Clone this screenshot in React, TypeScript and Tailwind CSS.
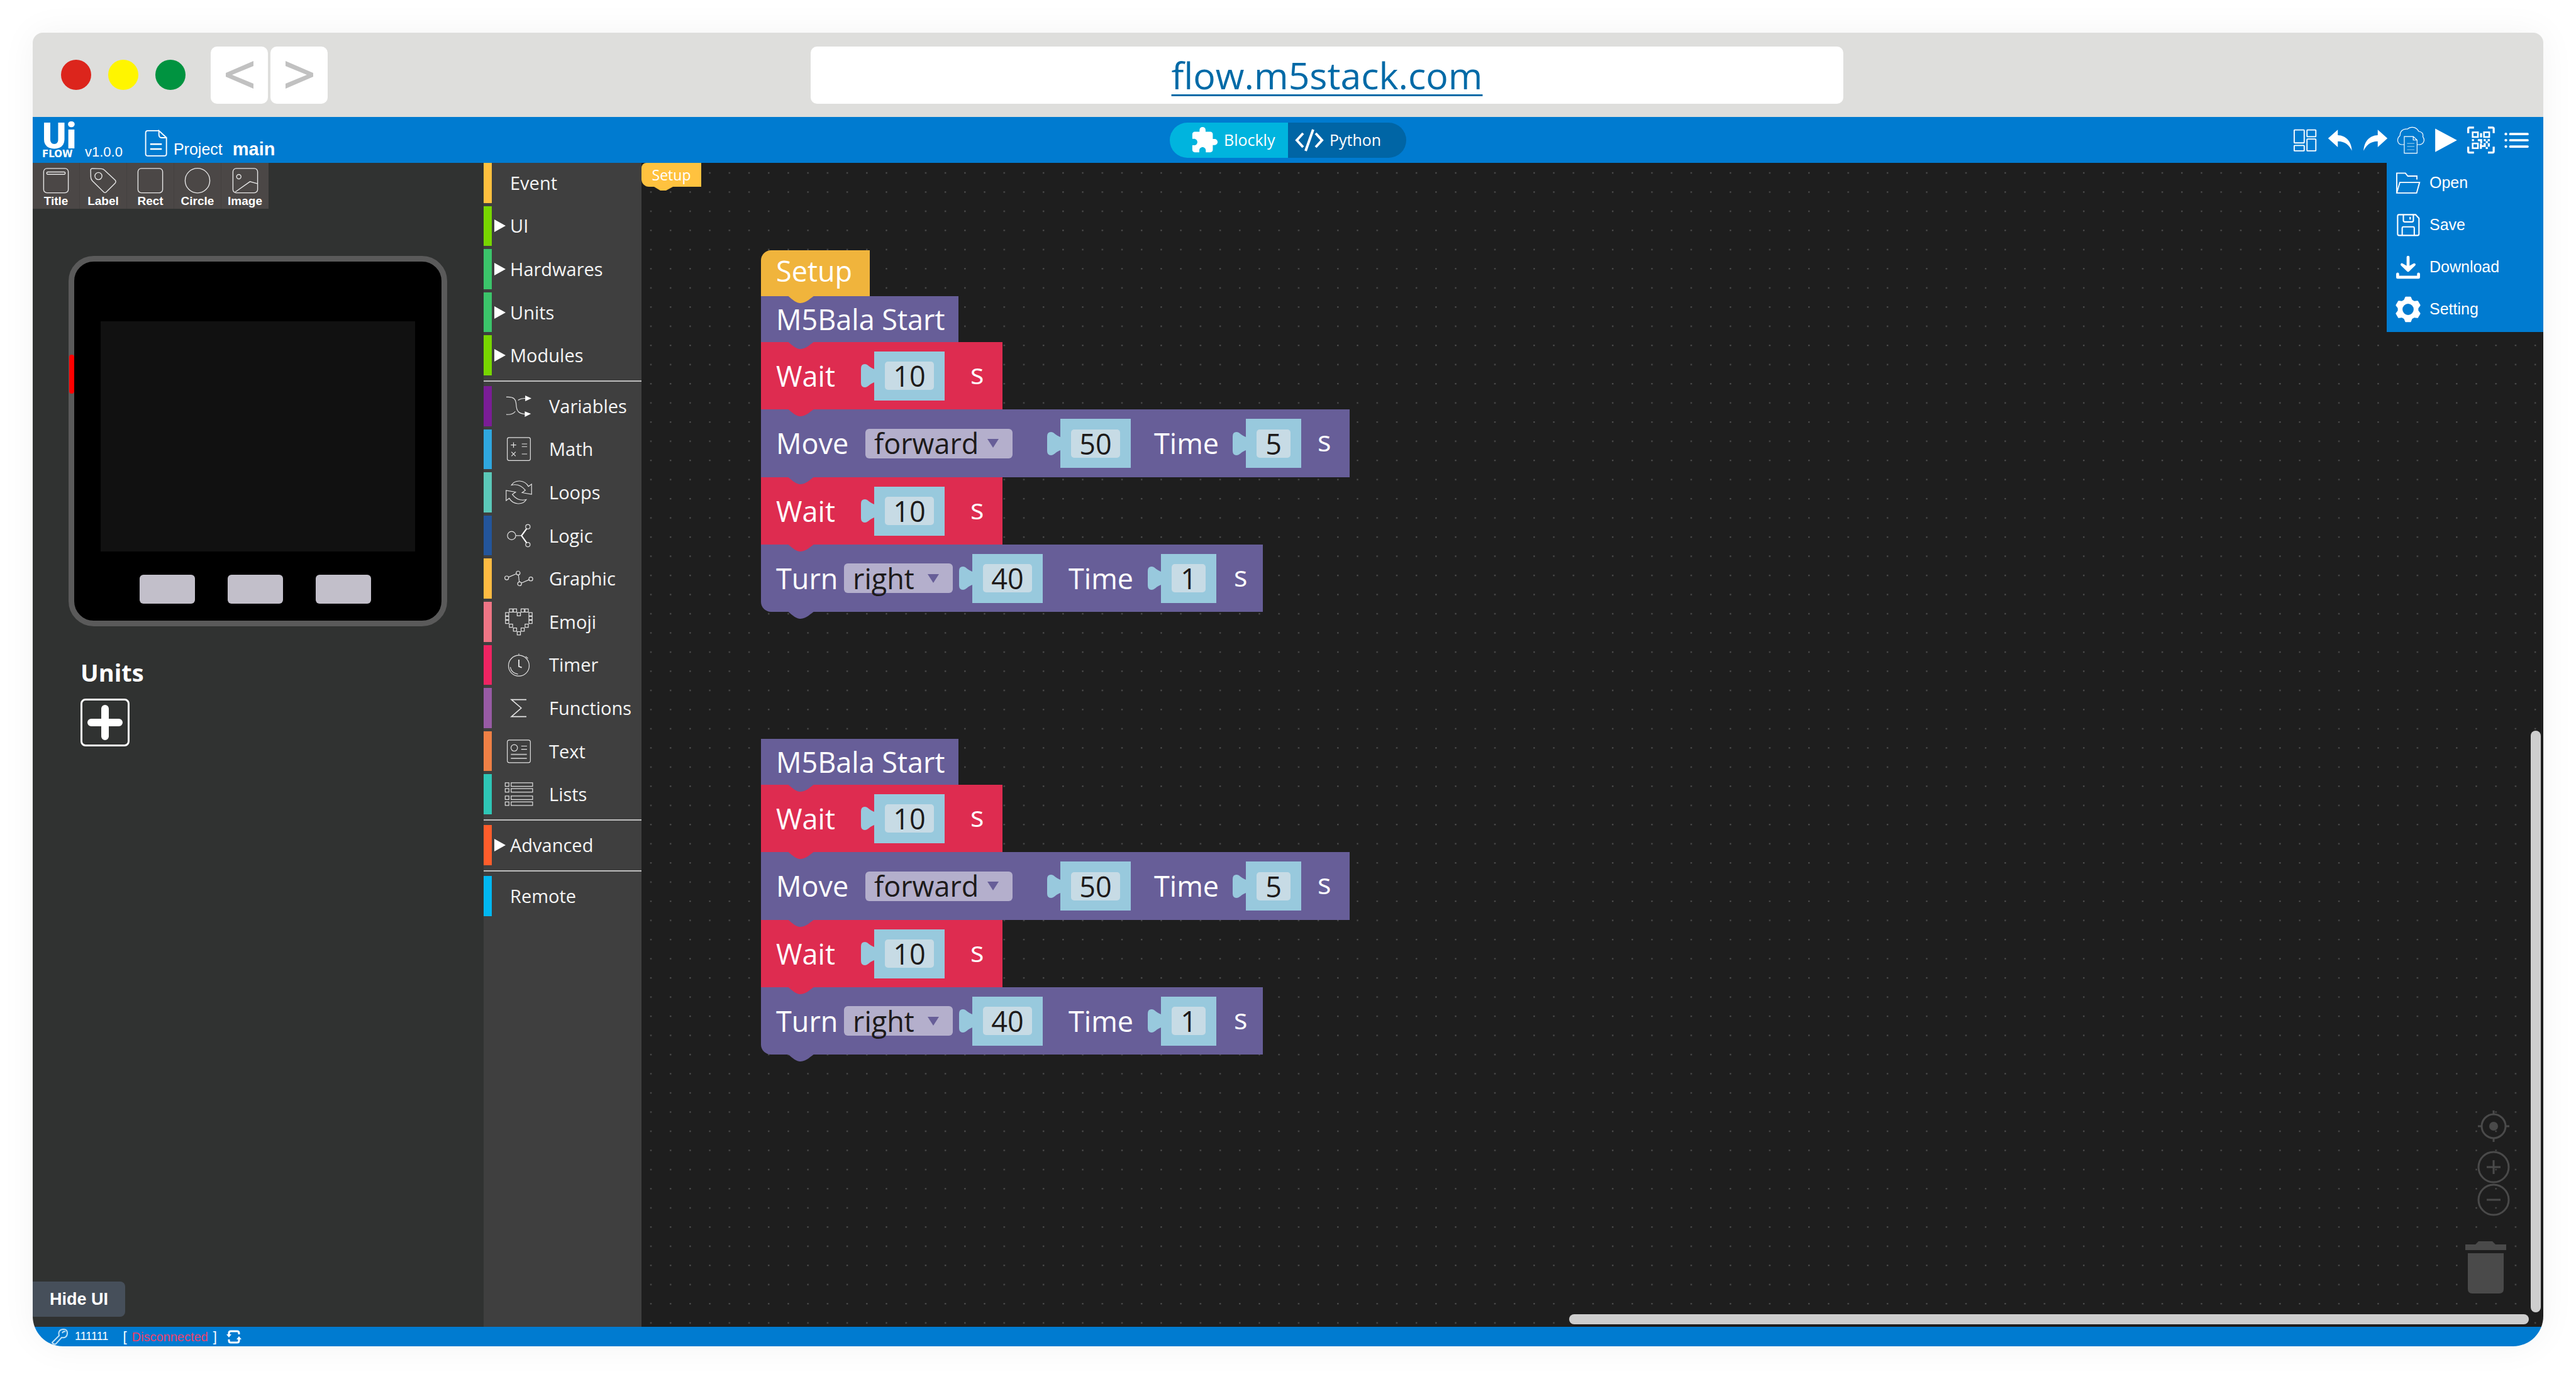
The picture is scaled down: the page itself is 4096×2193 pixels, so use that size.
import React from 'react';
import { MdExtension } from 'react-icons/md';

const SEGOE = "font-['Open_Sans','Noto_Sans',sans-serif]";

/* ---------- toolbar icons ---------- */

function ToolbarIcon({ children }: { children: React.ReactNode }) {
  return (
    <svg viewBox="0 0 188 188" className="size-11" fill="none" stroke="none" aria-hidden="true">
      {children}
    </svg>
  );
}

const undoPath = 'M12 81 L78 22 V60 C135 62 170 103 174 166 C155 128 130 103 78 102 V141Z';

const actions = [
  {
    name: 'Layout',
    icon: (
      <g stroke="#fff" strokeWidth="8">
        <rect x="21" y="24" width="68" height="88" rx="3" />
        <rect x="108" y="24" width="60" height="46" rx="3" />
        <rect x="108" y="86" width="60" height="80" rx="3" />
        <rect x="21" y="130" width="68" height="36" rx="3" />
      </g>
    ),
  },
  { name: 'Undo', icon: <path d={undoPath} fill="#fff" /> },
  { name: 'Redo', icon: <path d={undoPath} fill="#fff" transform="translate(188 0) scale(-1 1)" /> },
  {
    name: 'Cloud files',
    icon: (
      <g stroke="#fff" strokeWidth="5">
        <path d="M51 124 H37 C4 124 -4 85 22 63 C22 33 42 14 72 18 C97 -3 135 5 148 33 C172 38 182 50 177 70 C196 95 180 124 150 124 H138" />
        <path d="M51 69 H112 L138 93 V182 H51Z M112 69 V93 H138" />
        <path d="M70 116 H120 M70 136 H120 M70 158 H120" strokeOpacity="0.55" />
      </g>
    ),
  },
  { name: 'Run', icon: <path d="M22 15 L170 94 L22 174Z" fill="#fff" /> },
  {
    name: 'QR code',
    icon: (
      <g>
        <path
          d="M7 46 V16 Q7 8 15 8 H46 M141 8 H172 Q180 8 180 16 V46 M180 138 V170 Q180 178 172 178 H141 M46 178 H15 Q7 178 7 170 V138"
          stroke="#fff"
          strokeWidth="14"
        />
        <g stroke="#fff" strokeWidth="11">
          <rect x="37" y="40" width="36" height="32" />
          <rect x="114" y="40" width="36" height="32" />
          <rect x="37" y="116" width="36" height="32" />
        </g>
        <path
          fill="#fff"
          d="M87 46h14v29H87z M32 86h14v14H32z M72 86h30v14H72z M88 100h14v14H88z M112 86h14v14h-14z M139 86h15v14h-15z M126 100h14v14h-14z M140 114h14v24h-14z M86 116h14v37H86z M100 128h26v12h-26z M112 114h14v14h-14z M126 140h14v14h-14z"
        />
      </g>
    ),
  },
  {
    name: 'Menu',
    icon: (
      <g stroke="#fff" strokeWidth="16" strokeLinecap="round">
        <path d="M23 52h1 M23 94h1 M23 137h1" strokeWidth="18" />
        <path d="M53 52H171 M53 94H171 M53 137H171" />
      </g>
    ),
  },
];

const menuItems = [
  {
    name: 'Open',
    icon: (
      <g stroke="#fff" strokeWidth="8">
        <path d="M17 160 V27 H76 L92 47 H154 V70" />
        <path d="M17 162 L38 90 H172 L152 162Z" />
      </g>
    ),
  },
  {
    name: 'Save',
    icon: (
      <g stroke="#fff" strokeWidth="9">
        <path d="M33 23 H145 L168 48 V154 Q168 164 158 164 H33 Q23 164 23 154 V33 Q23 23 33 23Z" />
        <path d="M62 23 V62 Q62 72 72 72 H120 Q130 72 130 62 V23" />
        <path d="M54 164 V114 Q54 106 62 106 H128 Q136 106 136 114 V164" />
        <rect x="103" y="38" width="10" height="18" fill="#fff" stroke="none" />
      </g>
    ),
  },
  {
    name: 'Download',
    icon: (
      <g stroke="#fff" strokeWidth="20" strokeLinecap="round" strokeLinejoin="round">
        <path d="M94 26 V104" />
        <path d="M52 76 L94 116 L136 76 L94 100Z" fill="#fff" strokeWidth="18" />
        <path d="M23 140 V162 H165 V140" />
      </g>
    ),
  },
  {
    name: 'Setting',
    icon: (
      <g transform="translate(94 94)">
        <circle r="54" stroke="#fff" strokeWidth="32" />
        {[0, 60, 120, 180, 240, 300].map((a) => (
          <path
            key={a}
            d="M-15 -82 H15 L26 -56 H-26Z"
            fill="#fff"
            stroke="#fff"
            strokeWidth="10"
            strokeLinejoin="round"
            transform={`rotate(${a})`}
          />
        ))}
      </g>
    ),
  },
];

/* ---------- design tools ---------- */

const tools = [
  {
    name: 'Title',
    icon: (
      <>
        <rect x="6" y="8" width="168" height="166" rx="22" />
        <rect x="27" y="32" width="126" height="16" rx="8" />
      </>
    ),
  },
  {
    name: 'Label',
    icon: (
      <>
        <path d="M5 20 Q5 8 17 8 L78 10 Q92 11 100 20 L172 88 Q180 97 172 108 L112 168 Q103 178 93 168 L16 92 Q6 80 6 66Z" />
        <circle cx="58" cy="60" r="24" />
      </>
    ),
  },
  { name: 'Rect', icon: <rect x="6" y="8" width="168" height="166" rx="22" /> },
  { name: 'Circle', icon: <circle cx="90" cy="91" r="84" /> },
  {
    name: 'Image',
    icon: (
      <>
        <rect x="6" y="8" width="168" height="166" rx="22" />
        <circle cx="46" cy="64" r="15" />
        <path d="M22 168 L122 98 L174 112" />
      </>
    ),
  },
];

/* ---------- block categories ---------- */

const heartCells: [number, number][] = [
  [-53, -77], [-26, -77], [26, -77], [53, -77],
  [-79, -52], [0, -52], [79, -52],
  [-79, -26], [79, -26],
  [-79, 0], [79, 0],
  [-53, 26], [53, 26],
  [-26, 52], [26, 52],
  [0, 77],
];

const loopArrow = 'M-50 -49 C-27 -87 38 -87 65 -40 L86 -56 V13 L22 2 L44 -14 C18 -47 -17 -57 -50 -49Z';

type Category = { name: string; color: string; expandable?: boolean; icon?: React.ReactNode };

const groups: Category[][] = [
  [
    { name: 'Event', color: 'bg-[#ffc03e]' },
    { name: 'UI', color: 'bg-[#77d600]', expandable: true },
    { name: 'Hardwares', color: 'bg-[#3bc46a]', expandable: true },
    { name: 'Units', color: 'bg-[#3bc46a]', expandable: true },
    { name: 'Modules', color: 'bg-[#77d600]', expandable: true },
  ],
  [
    {
      name: 'Variables',
      color: 'bg-[#7a1d96]',
      icon: (
        <>
          <path d="M-85 -62 C-32 -66 -20 -46 -18 -12 C-16 38 3 50 43 53 M-85 56 C-57 58 -37 53 -24 35 M-5 -40 C8 -50 23 -53 43 -53" />
          <path d="M43 -72 L85 -53 L43 -34Z M40 35 L82 51 L40 72Z" fill="#fff" stroke="none" />
        </>
      ),
    },
    {
      name: 'Math',
      color: 'bg-[#2fa7df]',
      icon: (
        <>
          <rect x="-78" y="-77" width="156" height="155" rx="12" />
          <path d="M-54 -27H-18 M-36 -45V-9 M20 -34H56 M20 -16H56 M-50 20L-22 48 M-22 20L-50 48 M20 34H56" />
        </>
      ),
    },
    {
      name: 'Loops',
      color: 'bg-[#5bc8b8]',
      icon: (
        <>
          <path d={loopArrow} />
          <path d={loopArrow} transform="rotate(180)" />
        </>
      ),
    },
    {
      name: 'Logic',
      color: 'bg-[#23559b]',
      icon: (
        <>
          <circle cx="-49" cy="-1" r="28" />
          <path d="M-21 -1H18" />
          <path d="M53 -48L18 -1L53 48" strokeWidth="9" stroke="#fff" />
          <circle cx="61" cy="-61" r="15" />
          <circle cx="61" cy="60" r="15" />
        </>
      ),
    },
    {
      name: 'Graphic',
      color: 'bg-[#ffbb42]',
      icon: (
        <>
          <circle cx="-82" cy="-4" r="13" />
          <circle cx="-5" cy="-37" r="13" />
          <circle cx="5" cy="36" r="13" />
          <circle cx="81" cy="3" r="13" />
          <path d="M-70 -9L-17 -32 M-3 -24L3 23 M17 31L69 8" />
        </>
      ),
    },
    {
      name: 'Emoji',
      color: 'bg-[#ee7585]',
      icon: (
        <>
          {heartCells.map(([x, y]) => (
            <rect key={`${x},${y}`} x={x - 11} y={y - 11} width="22" height="22" />
          ))}
        </>
      ),
    },
    {
      name: 'Timer',
      color: 'bg-[#ee2462]',
      icon: (
        <>
          <circle cx="0" cy="7" r="70" />
          <path d="M0 -66V-74 M46 -56L62 -42 M-58 16C-52 44 -32 60 -6 64" />
          <path d="M0 -34V12L20 20" strokeWidth="8" />
        </>
      ),
    },
    { name: 'Functions', color: 'bg-[#985ba5]', icon: <path d="M51 -57H-50L16 0L-50 58H51" strokeWidth="7" /> },
    {
      name: 'Text',
      color: 'bg-[#ef8045]',
      icon: (
        <>
          <rect x="-78" y="-77" width="156" height="153" rx="14" />
          <circle cx="-31" cy="-24" r="22" />
          <path d="M16 -36H55 M16 -14H55" />
          <path d="M-54 20H54 M-54 47H54" strokeWidth="9" strokeOpacity="0.7" />
        </>
      ),
    },
    {
      name: 'Lists',
      color: 'bg-[#2ec6b6]',
      icon: (
        <>
          {[-65, -26, 24, 64].map((y) => (
            <g key={y}>
              <rect x="-92" y={y - 12} width="25" height="24" />
              <rect x="-52" y={y - 12} width="145" height="24" />
            </g>
          ))}
        </>
      ),
    },
  ],
  [{ name: 'Advanced', color: 'bg-[#ff5d2b]', expandable: true }],
  [{ name: 'Remote', color: 'bg-[#00b7f1]' }],
];

function CategoryRow({ name, color, expandable, icon }: Category) {
  return (
    <button type="button" className="flex min-h-0 flex-1 items-center text-left">
      <span className={`${color} w-[13px] self-stretch`} />
      {icon ? (
        <span className="flex w-[91px] items-center pl-[19px]">
          <svg viewBox="-102 -102 204 204" className="size-12" fill="none" stroke="#e4e4e4" strokeWidth="5" aria-hidden="true">
            {icon}
          </svg>
        </span>
      ) : (
        <span className="w-[29px] pl-1">
          {expandable && (
            <svg viewBox="0 0 18 20" className="h-5 w-[18px]" aria-hidden="true">
              <path d="M0 0L18 10L0 20Z" fill="#fff" />
            </svg>
          )}
        </span>
      )}
      <span className="leading-10">{name}</span>
    </button>
  );
}

/* ---------- blocks ---------- */

const fills = {
  amber: { bg: 'bg-[#f0b43c]', fill: 'fill-[#f0b43c]' },
  violet: { bg: 'bg-[#675e98]', fill: 'fill-[#675e98]' },
  red: { bg: 'bg-[#de2c50]', fill: 'fill-[#de2c50]' },
};

function Block({ tone, className, children }: { tone: keyof typeof fills; className: string; children: React.ReactNode }) {
  return (
    <div className={`relative flex items-center pl-[24px] ${fills[tone].bg} ${className}`}>
      {children}
      <svg viewBox="0 0 43 12" className={`absolute top-full left-[42px] z-10 -mt-px h-3 w-[43px] ${fills[tone].fill}`} aria-hidden="true">
        <path d="M0 0 C5 3 12 12 21 12 S38 3 43 0Z" />
      </svg>
    </div>
  );
}

function NumberSlot({ value, label, wide }: { value: string; label: string; wide?: boolean }) {
  return (
    <span className="flex items-center">
      <svg viewBox="0 0 21 37" className="h-[37px] w-[21px] fill-[#98c9dd]" aria-hidden="true">
        <path d="M21 8 C13 5 11 0 6 0 Q0 0 0 7 V30 Q0 37 6 37 C11 37 13 32 21 29Z" />
      </svg>
      <span className={`flex h-[78px] items-center bg-[#98c9dd] px-[17px] ${wide ? 'w-28' : 'w-[88px]'}`}>
        <input
          aria-label={label}
          defaultValue={value}
          className="h-[45px] w-full rounded-[5px] bg-[#c7dbe5] p-0 text-center leading-[45px] text-[#1d1a1a]"
        />
      </span>
    </span>
  );
}

function Choice({ value, options, label, className }: { value: string; options: string[]; label: string; className: string }) {
  return (
    <span className="relative flex h-[47px] items-center rounded-md bg-[#b4afcc]">
      <select
        aria-label={label}
        defaultValue={value}
        className={`h-[66px] shrink-0 appearance-none bg-transparent py-0 leading-[66px] text-[#1d1a1a] ${className}`}
      >
        {options.map((o) => (
          <option key={o}>{o}</option>
        ))}
      </select>
      <svg viewBox="0 0 18 14" className="pointer-events-none absolute right-[22px] h-3.5 w-[18px] fill-[#675e98]" aria-hidden="true">
        <path d="M0 0H18L9 14Z" />
      </svg>
    </span>
  );
}

function Seconds({ className }: { className: string }) {
  return <span className={`pb-2 ${className}`}>s</span>;
}

function WaitBlock() {
  return (
    <Block tone="red" className="h-[107px] w-[384px]">
      <span className="w-[135px]">Wait</span>
      <NumberSlot value="10" label="Wait seconds" wide />
      <Seconds className="ml-[41px]" />
    </Block>
  );
}

function MotionStack() {
  return (
    <>
      <Block tone="violet" className="h-[73px] w-[314px]">
        M5Bala Start
      </Block>
      <WaitBlock />
      <Block tone="violet" className="h-[108px] w-[936px]">
        <span className="w-[142px]">Move</span>
        <Choice label="Move direction" value="forward" options={['forward', 'backward']} className="w-[234px] pl-[14px]" />
        <span className="w-[55px]" />
        <NumberSlot value="50" label="Move speed" wide />
        <span className="w-[162px] pl-[37px]">Time</span>
        <NumberSlot value="5" label="Move time" />
        <Seconds className="ml-[26px]" />
      </Block>
      <WaitBlock />
      <Block tone="violet" className="h-[107px] w-[798px] rounded-bl-2xl">
        <span className="w-[108px]">Turn</span>
        <Choice label="Turn direction" value="right" options={['right', 'left']} className="w-[173px] pl-[14px]" />
        <span className="w-[10px]" />
        <NumberSlot value="40" label="Turn speed" wide />
        <span className="w-[167px] pl-[41px]">Time</span>
        <NumberSlot value="1" label="Turn time" />
        <Seconds className="ml-[28px]" />
      </Block>
    </>
  );
}

/* ---------- page regions ---------- */

function TitleBar() {
  return (
    <header className="flex h-[134px] shrink-0 items-center bg-[#dededc] pl-[45px]">
      <div className="flex gap-[27px]">
        <span className="size-12 rounded-full bg-[#dc251c]" />
        <span className="size-12 rounded-full bg-[#fff500]" />
        <span className="size-12 rounded-full bg-[#009340]" />
      </div>
      <nav className="ml-10 flex gap-1" aria-label="History">
        <button type="button" aria-label="Back" className="flex size-[91px] items-center justify-center rounded-[10px] bg-white">
          <svg viewBox="0 0 44 44" className="size-11 fill-[#c1c1c1]" aria-hidden="true">
            <path d="M44 0V8L10 22L44 36V44L0 25V19Z" />
          </svg>
        </button>
        <button type="button" aria-label="Forward" className="flex size-[91px] items-center justify-center rounded-[10px] bg-white">
          <svg viewBox="0 0 44 44" className="size-11 fill-[#c1c1c1]" aria-hidden="true">
            <path d="M0 0V8L34 22L0 36V44L44 25V19Z" />
          </svg>
        </button>
      </nav>
      <div className="mr-[1113px] ml-[768px] flex h-[91px] flex-1 items-center justify-center rounded-[10px] bg-white">
        <a
          href="#flow"
          className={`${SEGOE} text-[59px] leading-[80px] text-[#006aa7] underline decoration-[3px] underline-offset-[8px]`}
        >
          flow.m5stack.com
        </a>
      </div>
    </header>
  );
}

function Toolbar() {
  return (
    <div className="grid h-[73px] shrink-0 grid-cols-[1fr_auto_1fr] items-center bg-[#007bd0] text-[25px] leading-[25px] text-white">
      <div className="flex h-full items-end pb-1.5 pl-[15px]">
        <div className="flex w-[54px] flex-col self-start pt-2">
          <span className="font-[Roboto,sans-serif] text-[58px] leading-[44px] font-black">Ui</span>
          <span className="font-['DejaVu_Sans',sans-serif] text-[15px] leading-[14px] font-bold">FLOW</span>
        </div>
        <span className="ml-[14px] text-[22px] leading-[22px]">v1.0.0</span>
        <svg viewBox="0 0 160 188" className="mb-[3px] ml-[35px] h-11 w-[37px]" fill="none" stroke="#fff" strokeWidth="8" aria-hidden="true">
          <path d="M98 7 H22 Q7 7 7 22 V165 Q7 180 22 180 H135 Q150 180 150 165 V55 L98 7 V35 Q98 55 118 55 H150" />
          <path d="M38 99H118 M38 133H118" strokeWidth="11" />
        </svg>
        <span className="mb-[3px] ml-[9px]">Project</span>
        <span className="mb-[3px] ml-4 text-[29px] font-bold">main</span>
      </div>
      <div className={`flex h-14 overflow-hidden rounded-full ${SEGOE}`} role="group" aria-label="Editor mode">
        <button type="button" className="flex w-[188px] items-center bg-[#00b4de] pl-8">
          <MdExtension className="size-[46px]" />
          <span className="ml-2">Blockly</span>
        </button>
        <button type="button" className="flex w-[188px] items-center bg-[#0065a5] pl-[10px]">
          <svg viewBox="0 0 48 36" className="h-9 w-12" fill="none" stroke="#fff" strokeWidth="4" aria-hidden="true">
            <path d="M14 7L4 18L14 29 M34 7L44 18L34 29 M30 1L18 35" />
          </svg>
          <span className="ml-2">Python</span>
        </button>
      </div>
      <div className="flex justify-end gap-3 pr-[21px]">
        {actions.map((a) => (
          <button key={a.name} type="button" aria-label={a.name}>
            <ToolbarIcon>{a.icon}</ToolbarIcon>
          </button>
        ))}
      </div>
    </div>
  );
}

function DesignPanel() {
  return (
    <section className="flex w-[717px] shrink-0 flex-col bg-[#303231] text-white">
      <div className="flex">
        {tools.map((t) => (
          <button
            key={t.name}
            type="button"
            className="flex h-[73px] w-[75px] flex-col items-center gap-0.5 border-r border-[#444140] bg-[#4b4746] pt-[7px] text-[19px] leading-5 font-bold last:border-0"
          >
            <svg viewBox="0 0 180 180" className="size-[42px]" fill="none" stroke="#e6e6e6" strokeWidth="6" aria-hidden="true">
              {t.icon}
            </svg>
            {t.name}
          </button>
        ))}
      </div>

      <div className="relative mt-[75px] ml-[57px] flex h-[589px] w-[602px] flex-col items-center rounded-[40px] border-[9px] border-[#5a5a5a] bg-black pt-[95px]">
        <span className="absolute top-[148px] -left-2 h-[62px] w-2 rounded-sm bg-[#ff0000]" />
        <div className="h-[366px] w-[500px] bg-[#111111]" />
        <div className="mt-[37px] flex gap-[52px] pr-2">
          <button type="button" aria-label="Button A" className="h-[46px] w-[88px] rounded-md bg-[#c2bfca]" />
          <button type="button" aria-label="Button B" className="h-[46px] w-[88px] rounded-md bg-[#c2bfca]" />
          <button type="button" aria-label="Button C" className="h-[46px] w-[88px] rounded-md bg-[#c2bfca]" />
        </div>
      </div>

      <div className="mt-[45px] ml-[76px] flex flex-col items-start">
        <h2 className={`${SEGOE} text-[38px] leading-[56px] font-bold`}>Units</h2>
        <button type="button" aria-label="Add unit" className="mt-[14px] flex h-[76px] w-[78px] items-center justify-center rounded-lg border-[3px] border-white">
          <svg viewBox="0 0 58 58" className="size-[58px]" stroke="#fff" strokeWidth="12" strokeLinecap="round" aria-hidden="true">
            <path d="M29 7V51 M7 29H51" />
          </svg>
        </button>
      </div>

      <button type="button" className="mt-auto mb-4 h-14 w-[147px] self-start rounded-r-lg bg-[#464f5a] text-[27px] font-bold">
        Hide UI
      </button>
    </section>
  );
}

function Categories() {
  const heights = ['h-[338px]', 'h-[681px]', 'h-16', 'h-16'];
  return (
    <nav aria-label="Block categories" className={`w-[251px] shrink-0 bg-[#3f3f3f] ${SEGOE} text-[29px] font-medium text-[#f4f4f4]`}>
      {groups.map((g, i) => (
        <React.Fragment key={g[0].name}>
          {i > 0 && <hr className="mt-2 mb-[7px] border-t-2 border-[#bdbdbd]" />}
          <div className={`flex flex-col gap-[5px] ${heights[i]}`}>
            {g.map((c) => (
              <CategoryRow key={c.name} {...c} />
            ))}
          </div>
        </React.Fragment>
      ))}
    </nav>
  );
}

function Workspace() {
  return (
    <main className="relative min-w-0 flex-1 overflow-hidden bg-[#1e1e1e]">
      <svg className="absolute inset-0 size-full" aria-hidden="true">
        <defs>
          <pattern id="dots" width="31.21" height="30.48" patternUnits="userSpaceOnUse">
            <rect x="14" y="15" width="2" height="2" fill="#5c5c5c" />
          </pattern>
        </defs>
        <rect width="100%" height="100%" fill="url(#dots)" />
      </svg>

      <div className={`absolute top-0 left-0 flex h-[38px] w-[95px] items-center justify-center rounded-l-xl rounded-tl-lg bg-[#ffc23f] text-white ${SEGOE} text-[23px] font-medium`}>
        Setup
        <svg viewBox="0 0 30 7" className="absolute top-full left-5 h-[7px] w-[30px] fill-[#ffc23f]" aria-hidden="true">
          <path d="M0 0L10 6H19L30 0Z" />
        </svg>
      </div>

      <div className={`absolute top-[139px] left-[190px] flex flex-col items-start text-white ${SEGOE} text-[45px] leading-[60px]`}>
        <Block tone="amber" className="h-[73px] w-[173px] rounded-tl-2xl pb-2">
          Setup
        </Block>
        <MotionStack />
      </div>
      <div className={`absolute top-[916px] left-[190px] flex flex-col items-start text-white ${SEGOE} text-[45px] leading-[60px]`}>
        <MotionStack />
      </div>

      <div className="absolute top-0 right-0 -mt-0.5 flex w-[249px] flex-col bg-[#007bd0] pb-[3px] text-[25px] text-white">
        {menuItems.map((m) => (
          <button key={m.name} type="button" className="flex h-[67px] items-center gap-3 pl-3">
            <ToolbarIcon>{m.icon}</ToolbarIcon>
            {m.name}
          </button>
        ))}
      </div>

      <div className="absolute right-[53px] bottom-[176px] flex flex-col items-center text-[#4a4a4a]">
        <button type="button" aria-label="Center">
          <svg viewBox="0 0 52 52" className="size-[52px]" fill="none" stroke="currentColor" strokeWidth="3" aria-hidden="true">
            <circle cx="26" cy="26" r="19" />
            <circle cx="26" cy="26" r="7" fill="currentColor" stroke="none" />
            <path d="M26 1V7 M26 45V51 M1 26H7 M45 26H51" />
          </svg>
        </button>
        <button type="button" aria-label="Zoom in" className="mt-[13px]">
          <svg viewBox="0 0 52 52" className="size-[52px]" fill="none" stroke="currentColor" strokeWidth="3" aria-hidden="true">
            <circle cx="26" cy="26" r="24" />
            <path d="M26 15V37 M15 26H37" />
          </svg>
        </button>
        <button type="button" aria-label="Zoom out">
          <svg viewBox="0 0 52 52" className="size-[52px]" fill="none" stroke="currentColor" strokeWidth="3" aria-hidden="true">
            <circle cx="26" cy="26" r="24" />
            <path d="M15 26H37" />
          </svg>
        </button>
      </div>
      <button type="button" aria-label="Trash" className="absolute right-[59px] bottom-[53px]">
        <svg viewBox="0 0 65 83" className="h-[83px] w-[65px] fill-[#4a4a4a]" aria-hidden="true">
          <path d="M0 5H16L21 0H43L48 5H65V14H0Z M4 19H61V76Q61 83 54 83H11Q4 83 4 76Z" />
        </svg>
      </button>

      <div className="absolute right-1 bottom-[23px] h-[50%] w-4 rounded-full bg-[#cecece]" />
      <div className="absolute right-[23px] bottom-1 h-4 w-[1526px] rounded-full bg-[#cecece]" />
    </main>
  );
}

function StatusBar() {
  return (
    <footer className="flex h-[31px] shrink-0 items-center bg-[#007bd0] pl-[29px] text-white">
      <svg viewBox="0 0 28 27" className="h-[27px] w-7" fill="none" stroke="#bfe0f5" strokeWidth="2" aria-hidden="true">
        <path d="M13 12 C11 5 15 2 20 2 Q26 2 26 8 C26 14 22 16 17 15 L8 25 Q4 27 2 23 Z" />
        <path d="M18 8 Q20 4 23 6" />
      </svg>
      <span className="ml-2.5 text-[18px]">111111</span>
      <span className="ml-[23px] text-[22px]">[</span>
      <span className="mx-2 text-[20px] text-[#f0416c]">Disconnected</span>
      <span className="text-[22px]">]</span>
      <button type="button" aria-label="Refresh" className="ml-[15px]">
        <svg viewBox="0 0 24 24" className="size-6" fill="none" stroke="#fff" strokeWidth="3" aria-hidden="true">
          <path d="M20 8V6Q20 3 17 3H7Q4 3 4 6V9 M4 16V18Q4 21 7 21H17Q20 21 20 18V15" />
          <path d="M0 8H8L4 13Z M16 16H24L20 11Z" fill="#fff" stroke="none" />
        </svg>
      </button>
    </footer>
  );
}

export default function App() {
  return (
    <div className="flex min-h-screen flex-col bg-white p-[52px] font-['Liberation_Sans',Arial,sans-serif]">
      <div className="flex flex-1 flex-col overflow-hidden rounded-t-2xl rounded-b-[48px] shadow-[0_0_56px_rgba(0,0,0,0.05)]">
        <TitleBar />
        <Toolbar />
        <div className="flex flex-1">
          <DesignPanel />
          <Categories />
          <Workspace />
        </div>
        <StatusBar />
      </div>
    </div>
  );
}
